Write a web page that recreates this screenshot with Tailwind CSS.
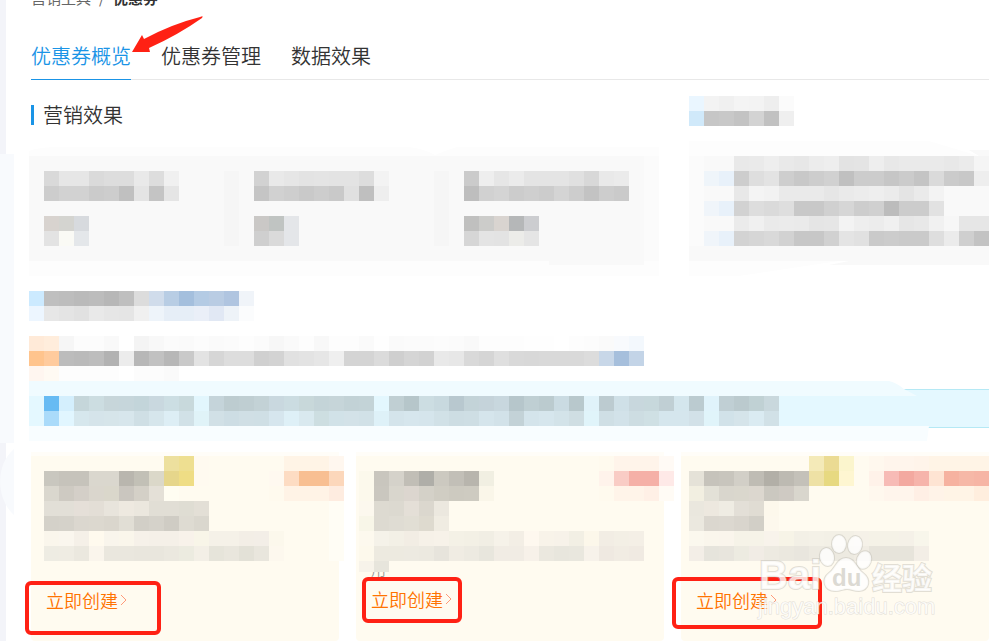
<!DOCTYPE html>
<html lang="zh-CN">
<head>
    <meta charset="UTF-8">
    <meta name="viewport" content="width=device-width, initial-scale=1.0">
    <title>优惠券</title>
    <script src="https://cdn.jsdelivr.net/npm/@tailwindcss/browser@4"></script>
</head>
<body class="bg-white text-[#333333] font-['Noto_Sans_CJK_SC',sans-serif] overflow-hidden">
    <div class="relative flex min-h-screen">
        <aside class="flex flex-col w-[14px] shrink-0">
            <div class="w-[6px] h-[154px] bg-[#f3f4f9]"></div>
            <div class="h-[289px] bg-[#f8fafd]"></div>
            <div class="relative w-[6px] flex-1 bg-[#f3f4f9]">
                <svg class="absolute left-0 top-0" width="14" height="80"><path d="M14 6C-5 22-4 56 14 72z" fill="#f8fafd"/></svg>
            </div>
        </aside>

        <main class="flex-1 min-w-0 pl-[15px]">
            <div class="pl-0.5">
                <div class="flex items-end h-2 overflow-hidden text-[15px] leading-5 text-[#666666]">
                    <span>营销工具</span>
                    <span class="px-2">/</span>
                    <span class="font-bold text-[#333333]">优惠券</span>
                </div>
                <nav class="flex gap-[30px] pt-[34px] border-b border-[#e8e8e8] text-[20px] leading-7 font-[350]">
                    <a href="#" class="-mb-px pb-[9px] border-b border-[#1a94e6] text-[#1a94e6]">优惠券概览</a>
                    <a href="#" class="pb-[9px]">优惠券管理</a>
                    <a href="#" class="pb-[9px]">数据效果</a>
                </nav>
            </div>

            <section class="grid grid-cols-[21fr_10fr] gap-[30px]">
                <div class="min-w-0 pt-[25px]">
                    <h2 class="ml-0.5 h-5 flex items-center border-l-3 border-[#1a94e6] pl-[9px] text-[20px] leading-5 font-[350]">营销效果</h2>
                    <div class="relative mt-[22px] h-[129px] pt-6">
                        <svg class="absolute inset-0 w-full h-full">
                            <path d="M0 4Q10 0 30 0H380Q396 2 406 8Q440-6 460-6H630V129H0z" fill="#fdfdfd"/>
                            <path d="M0 9H630V114H0z" fill="#fbfbfb"/>
                            <path d="M0 9H615V118H520V114H0z" fill="#f9f9f9"/>
                        </svg>
                        <div class="relative grid grid-cols-3">
                            <div class="flex justify-between pl-[15px]">
                                <div class="flex flex-col gap-[15px]">
                                    <svg data-rows="d9 e6*2 da dd*2 e9 dd f0|cd d2*2 cb cd c0 e4 c4 e5"></svg>
                                    <svg data-rows="d8d3cf d4d4d0 d7dade|e3 fafaf5 e4e7ea"></svg>
                                </div>
                                <div class="w-[15px] bg-[#f6f6f6]"></div>
                            </div>
                            <div class="flex justify-between pl-[15px]">
                                <div class="flex flex-col gap-[15px]">
                                    <svg data-rows="d2 e9 e6 e3 e4 e3*2 dd f3|c5 d1 ce c9 cd c9 e0 bf ee"></svg>
                                    <svg data-rows="cac8c6 c0c4c2 e4e6e9|cf da e4e6e9"></svg>
                                </div>
                                <div class="w-[15px] bg-[#f6f6f6]"></div>
                            </div>
                            <div class="flex flex-col gap-[15px] pl-[15px]">
                                <svg data-rows="cb ee e6 eb e4*3 e0 d8 e9 eb|be d1 d4 cc cf cc d4 cd c3 cd ca"></svg>
                                <svg data-rows="c0c0bf ccccca d9d4d0 b5b7b8 cccdd0|d6 e4 e3 ecece9 e5"></svg>
                            </div>
                        </div>
                    </div>
                </div>

                <div class="min-w-0 pt-4 overflow-hidden">
                    <svg data-rows="eaf6ff f3 f0 f4 f3 ee fb|d0e9fa c6 c8 c3 d3 c1 ef"></svg>
                    <div class="relative mt-[15px] h-[135px] pt-[15px]">
                        <svg class="absolute inset-0 w-full h-full">
                            <path d="M0 0H240L290 15H600V120H150L50 135H0z" fill="#fdfdfd"/>
                            <path d="M0 15H290L280 9H900V124H140L160 120H0z" fill="#f9f9f9"/>
                        </svg>
                        <svg class="relative" data-rows="fb f9*2 e9 ea ee e9 e7 ec ee e3 e4 ee e8 ea*3 e8 eb f5|fb eff5fa e8f1fa cd de e3 ce c8 cd d1 c0 cc*2 c6 cb c4 da cb c8 ee|fb f9*2 e8 f4 f2 ea*3 e6 ea ec ee eb e4 ea f3 f9*3|fb f0f5fa e8f1fa d2 dd da de c8*2 d0 d6 cd d0 bc cc*2 e2 f9*3|fb f9*2 eb f0 ea eb ea e5 e6 f3 ee ec f0 e6 e8 f1 f7 e6*2|fb f0f5fa e8f1fa d3 d6 d9 d2 c7*2 d1 e4 e1 ca cc ca*2 de eb cf c3"></svg>
                    </div>
                </div>
            </section>

            <section class="flex flex-col gap-[15px] pt-[15px]">
                <svg data-rows="cceaff bf bd ba bc b7 bf dc d0dceb b8cde4 a4bfdd b4cbe4 b9cce3 b0c5e0 f0f4f9|edf6ff e7 e4 e1 e9 e6 e5 f0 eef4fa e6eef7*2 eaeff8 e1e8f4 eef3f8 fbfcfd"></svg>
                <svg data-rows="ffead8 ffeddc f6 fc*2 f9 ff f4 f8 fb fa fc fa fb fd fb f7 fa fd f8 fd*2 fa fe fa fb*2 fc fb f9 fd*3 fe*2 ff fd fc fa f8fafd f3f8fd|ffc48d ffcb9d bc ba bd b2 ec b7 c1 b7 c9 e3 d6 dd*2 d0 d3 e1 e3 e6 ef d4*2 db cf d5 d2 e9 e7 d9 d5 df d9 d8 d9*3 dc c8d7e8 a6bfdc c3d4e7|fff6f0 fffaf3 fd*4 ff fc*2 fa"></svg>
            </section>

            <div class="relative h-[60px] pt-[15px]">
                <div class="absolute inset-x-0 top-2 h-[39px] bg-[#e4f8ff] border-y border-[#b5e9f5]"></div>
                <svg class="absolute inset-0 w-full h-full">
                    <path d="M0 0H860Q868 2 875 8L888 15H0z" fill="#f0fbff"/>
                    <path d="M0 45H900L898 60H0z" fill="#f8fdff"/>
                </svg>
                <svg class="relative" data-rows="e4f8ff 67bbf3 d4effd c5d6da ccdde1 c7d6da c6d6db c3d5da c9d8df ccdee3 c8d9dc e2f6fd c5d4da bdccd0 bfced2 c3d2d6 c9d8df cbdce1 c8d8da c4d4d8 c6d5d9 c2d2d6 c3d3d7 e3f7fe c0cfd3 b6c6ca ccdde2 c8d9df b8c8cf c3d3d8 c5d3da c8d7de b6c6cb bfcfd3 bbcbcf cadbe2 b8c8cc e0f2f9 bccbd0 cfe0e7 c8d7dd c7d8dc c0cfd4 d4e6ed bbcbd0 e0f3fb c0cfd4 bbcace c0d1d4 c9d8dd|e4f8ff aadbfa e1f6ff d6e7ed d5e4ea d6e5ea d7e6ec cfdfe5 d6e6ec ddeef5 d1e1e7 e0f3f8 d1e0e6 cddde4 d0dfe5 cfdfe5 d6e6ee def0f7 d9e9ef cddee1 d1e2e8 d3e2e8 d1e1e7 def1f8 d4e4eb d6e6ed d5e5ec d1e1e7 cddde3 cedee4 d5e5ec d2e2e9 c3d2d7 d4e4eb d6e6ed d3e3e9 cfdee3 e0f4fa cfdfe5 d2e2e9 cddde2 cfe0e4 d5e6ed d5e6ed d2e1e8 e0f4fa d1e2e9 d5e4ea daebf2 d1e1e7"></svg>
            </div>

            <section class="grid grid-cols-3 gap-[17px] mt-[11px] pl-0.5">
                <div class="relative min-w-0 h-[189px] rounded-b-sm border-t-4 border-[#fffdf8] bg-[#fffbf0]">
                    <div class="h-30 pl-[13px]">
                        <svg data-rows="-*8 ede09e eedf91 fffaf0 -*5 fff4e6*3 fff7ef|c9c7bf c6c3bb*2 dad7ce*2 b9b6ae c2c0b6 dbd8c9 e6d68b efdd85 fffaf0 -*4 fff9f0 fddcc3 f8bf92*2 fcd7bb|dad7ce cecac2 d4cfc8 dad6cd dad7cb cac6bf d4d0c7 e4e0d7 fffdf2 -*6 fffaee fff3e6*3 feece0|e2dfd7*2 e5dfd8 e3ded6 e8e4dc eee9e0 ebe7de e1ded5*2 dfddd3 e3dfd6 -*8 fffdf5|d4d1c9 d5d2ca dbd7cf dcd8cf dad6cd e1ded5 d2cfc7 d5d2ca cfccc4 dedbd2 dad7ce -*8 fffdf5|faf6ec faf6ee f5f0e8 fffaee f9f5ec faf6eb f6f1e9 f5f0e8*2 f8f2ea f8f5e8 f5f1e8*2 f3eee6 f3eee7 fcf8ec -*3 fffdf5|eeece3 efece3 ebe8df faf5ec eae7de*2 e9e6dd*2 ebe8df ecebe0 f3efe6 e6e4da e9e6dd e3e1d7 e9e6dd fdf8ee -*3 fffdf5"></svg>
                    </div>
                    <a href="#" class="mt-3 ml-[15px] inline-flex items-center text-[18px] leading-6 font-[350] text-[#ff7300]">立即创建<svg class="ml-0.5" width="7" height="12" fill="none" stroke="#ff9a7a"><path d="M1 1l5 5-5 5"/></svg></a>
                    <div class="absolute -left-[6px] top-[125px] w-[136px] h-[54px] rounded-md border-4 border-[#ff2114]"></div>
                </div>

                <div class="relative min-w-0 h-[189px] rounded-b-sm border-t-4 border-[#fffdf8] bg-[#fffbf0]">
                    <div class="h-30 pl-[3px]">
                        <svg data-rows="-*16 fffaee fff4ea*3 fffaf5|fcf9ec c9c6be d5d2ca c1beb6 afaea8 ccc9c0 c2bfb7 b8b5ad f1efe2 -*7 fff3eb f9ccc5 f5b0a7*2 fee9e7|fcf9ec cac7bf d9d6cd dcd6cf d4d1c8 d0cdc3 cdcac0 cecbc1 faf6e9 -*7 fffaee fff4e9*2 fff0e6 fffbf5|fcf8ee dddad1 dcd9d0 e4dfd7 dbd7ce ece8df|f8f6e8 dddad1 dfdcd3 e1ded4 dedacf f0ece2|fdf9ee f5f2e9 f3f0e6 f2ede4 f6f1e8 f7f2e9 f4f1e6 f3f0e5 f1eee4 f6f2e9 f3eee5 fef8ef f8f3e9 f7f2e9 f2efe4 fcf7ea f2ede4 f3efe5 f4efe6|fdf9ec edeae0*2 edeae1 ece9e0 e7e4dc f0ece3 edeae1 e8e6dd f1ece4*2 f7f1e9 ebe8df e8e6dd e9e7de f7f2ea efe9e1 f1ece3 f0eae2"></svg>
                        <div class="flex h-[11px]"><div class="w-[15px] bg-[#f7f3ea]"></div><div class="w-[15px] bg-[#e7e5dc]"></div></div>
                        <div class="flex items-end h-[5px] pl-3 overflow-hidden text-[15px] leading-4 font-[350] text-[#999999]">用</div>
                    </div>
                    <a href="#" class="mt-[11px] ml-[15px] inline-flex items-center text-[18px] leading-6 font-[350] text-[#ff7300]">立即创建<svg class="ml-0.5" width="7" height="12" fill="none" stroke="#ff9a7a"><path d="M1 1l5 5-5 5"/></svg></a>
                    <div class="absolute left-[6px] top-[121px] w-[100px] h-[46px] rounded-md border-4 border-[#ff2114]"></div>
                </div>

                <div class="relative min-w-0 h-[189px] rounded-b-sm border-t-4 border-[#fffdf8] bg-[#fffbf0]">
                    <div class="h-30 pl-2">
                        <svg data-rows="-*8 f4eab8 ebdb93 fbf5cd - fff8ee fff5ec*2 fff4ea fff4e6*4|e5e2d8 c6c3bb c8c5bd d2cfc7 bfbcb4 b2afa7 bdbab2 c4c1b9 eee1a5 e7d981 fef6d1 - fff2e9 f7bbb6 f3a9a0 f6b4ab fee4d3 f6b2a0 f6b8a7 f6b5a5|f2efe1 e3e1d7 d9d6cd dad7cd dcd7cf cbc8c0 cfcac3 d9d6cd -*4 fff8ee fff5ec*2 ffefe5 fff3e8 fff4e6*2 ffeede|eae7de ede8df efece3 e3dfd7 e0dcd3 fdf8ec|ebe8df dbd7cf dcd8d0 d9d5cd d2cfc7 fdf8ed|fbf8ee faf6ec faf5ec f6f3e8*2 f8f3eb f7f4e7 f3f0e6 f4f1e7 f3f0e6*2 f5f1e8 f5f2e7*2 f5f1e8 f8f6eb|f3eee7 e6e4dc e8e5dd edebe1 f1ece5 edeae1 ebe8df e9e6de edeae1*3 f0ece3 e7e4db*3 f3eee6"></svg>
                    </div>
                    <a href="#" class="mt-3 ml-[15px] inline-flex items-center text-[18px] leading-6 font-[350] text-[#ff7300]">立即创建<svg class="ml-0.5" width="7" height="12" fill="none" stroke="#ff9a7a"><path d="M1 1l5 5-5 5"/></svg></a>
                    <div class="absolute -left-[9px] top-[121px] w-[150px] h-[52px] rounded-md border-4 border-[#ff2114]"></div>
                    <!-- watermark -->
                    <svg class="absolute right-[50px] top-[76px] font-['Liberation_Sans','Noto_Sans_CJK_SC',sans-serif]" width="184" height="92" fill="#ffffff" fill-opacity="0.8" stroke="#bdbab2" stroke-opacity="0.45" paint-order="stroke" stroke-width="2">
                        <text x="4" y="57" font-size="40" font-weight="bold">Bai</text>
                        <ellipse cx="84" cy="12" rx="7" ry="9"/>
                        <ellipse cx="100" cy="13" rx="7" ry="9" transform="rotate(10 100 13)"/>
                        <ellipse cx="72" cy="25" rx="7" ry="9" transform="rotate(-12 72 25)"/>
                        <ellipse cx="109" cy="28" rx="7" ry="9" transform="rotate(20 109 28)"/>
                        <path d="M91 26C82 26 81 36 74 41C66 47 69 59 80 59C86 59 88 57 92 57C96 57 99 59 104 59C115 58 116 47 108 41C101 36 100 26 91 26z"/>
                        <text x="77" y="54" font-size="24" font-weight="bold" fill="#d3d0c8" stroke="none">du</text>
                        <text x="117" y="57" font-size="30" font-weight="bold">经验</text>
                        <text x="3" y="82" font-size="22" stroke-width="1">jingyan.baidu.com</text>
                    </svg>
                </div>
            </section>
        </main>

        <svg class="absolute left-[130px] top-[15px]" width="76" height="40"><path d="M2 37L12 20L14 24Q42 9 70 2Q74 0 72 3Q48 20 19 33L20 37z" fill="#ff2114"/></svg>
    </div>

    <script>
        // data-rows: rows split by "|", cells by space, "c*n" repeats a cell, "-" is empty, two digits are a grey
        const CELL = 15;
        document.querySelectorAll('svg[data-rows]').forEach(svg => {
            const rows = svg.dataset.rows.split('|').map(row => row.split(' ').flatMap(cell => {
                const [color, count] = cell.split('*');
                return Array(Number(count || 1)).fill(color);
            }));
            svg.setAttribute('width', Math.max(...rows.map(row => row.length)) * CELL);
            svg.setAttribute('height', rows.length * CELL);
            svg.style.maxWidth = 'none';
            rows.forEach((row, y) => row.forEach((color, x) => {
                if (color === '-') return;
                const rect = document.createElementNS('http://www.w3.org/2000/svg', 'rect');
                rect.setAttribute('x', x * CELL);
                rect.setAttribute('y', y * CELL);
                rect.setAttribute('width', CELL);
                rect.setAttribute('height', CELL);
                rect.setAttribute('fill', '#' + (color.length === 2 ? color.repeat(3) : color));
                svg.appendChild(rect);
            }));
        });
    </script>
</body>
</html>
